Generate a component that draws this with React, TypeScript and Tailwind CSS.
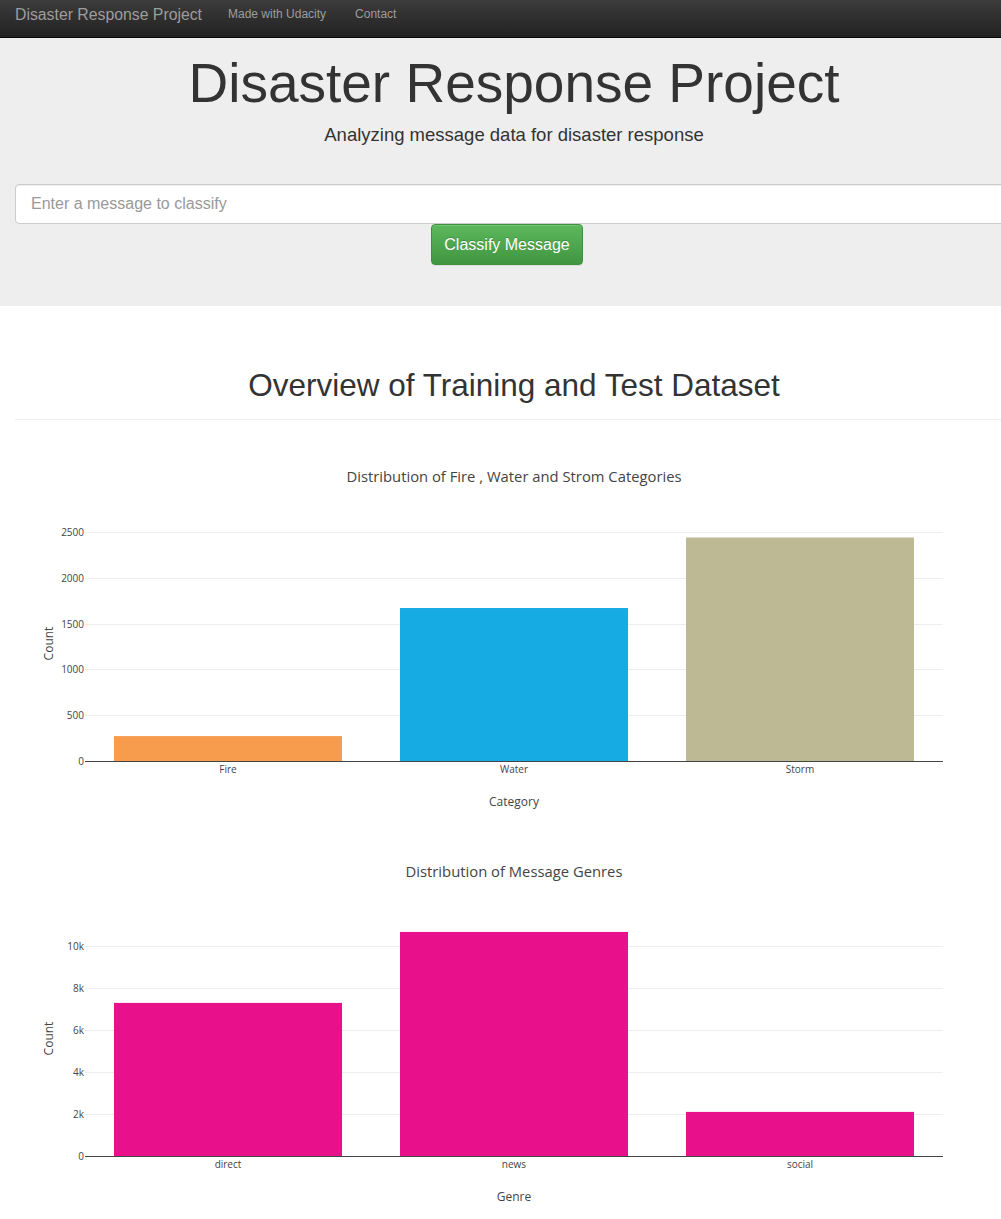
import React from "react";

type ChartProps = {
  title: string;
  xTitle: string;
  cats: string[];
  values: number[];
  colors: string[];
  ticks: number[];
  tickLabels: string[];
  scale: number;
};

function Chart({ title, xTitle, cats, values, colors, ticks, tickLabels, scale }: ChartProps) {
  const x0 = 85;
  const x1 = 943;
  const zeroY = 321;
  const band = 286;
  const font = "'Open Sans', Verdana, Arial, sans-serif";
  return (
    <svg width={1001} height={395} className="block" fontFamily={font}>
      <text x={514} y={41.5} fontSize={14.8} fill="#444" textAnchor="middle">
        {title}
      </text>
      {ticks.map((t, i) => {
        const y = Math.round(zeroY - t * scale) + 0.5;
        return (
          <g key={t}>
            {t !== 0 && <line x1={x0} x2={x1} y1={y} y2={y} stroke="#eee" strokeWidth={1} />}
            <text x={84} y={y + 3.5} fontSize={10} fill="#444" textAnchor="end">
              {tickLabels[i]}
            </text>
          </g>
        );
      })}
      {values.map((v, i) => {
        const h = v * scale;
        return (
          <rect
            key={cats[i]}
            x={x0 + i * band + 29}
            y={zeroY - h}
            width={228}
            height={h}
            fill={colors[i]}
          />
        );
      })}
      <line x1={x0} x2={x1} y1={zeroY + 0.5} y2={zeroY + 0.5} stroke="#444" strokeWidth={1} />
      {cats.map((c, i) => (
        <text key={c} x={x0 + i * band + 143} y={zeroY + 11.5} fontSize={10} fill="#444" textAnchor="middle">
          {c}
        </text>
      ))}
      <text x={514} y={zeroY + 45} fontSize={12} fill="#444" textAnchor="middle">
        {xTitle}
      </text>
      <text
        x={53}
        y={203.5}
        fontSize={12}
        fill="#444"
        textAnchor="middle"
        transform="rotate(-90 53 203.5)"
      >
        Count
      </text>
    </svg>
  );
}

export default function App() {
  return (
    <div className="w-full min-h-screen overflow-hidden bg-white font-['Liberation_Sans',Arial,sans-serif] text-[#333]">
      {/* Navbar */}
      <div className="h-[38px] w-full bg-gradient-to-b from-[#3c3c3c] to-[#222] border-b border-[#080808]">
        <div className="flex items-start">
          <span className="ml-[15px] mt-[5px] text-[15.8px] leading-[20px] text-[#9d9d9d]">
            Disaster Response Project
          </span>
          <span className="ml-[26px] mt-[4px] text-[12px] leading-[20px] text-[#9d9d9d]">Made with Udacity</span>
          <span className="ml-[29px] mt-[4px] text-[12px] leading-[20px] text-[#9d9d9d]">Contact</span>
        </div>
      </div>

      <div className="w-[1028px]">
        {/* Jumbotron */}
        <div className="bg-[#eee] pt-[15px] pb-[41px]">
          <h1 className="text-center text-[55px] leading-[60px] text-[#333]">Disaster Response Project</h1>
          <p className="mt-[10px] text-center text-[18.5px] leading-[24px] text-[#333]">
            Analyzing message data for disaster response
          </p>
          <div className="mt-[37px] px-[15px] flex flex-col items-center">
            <input
              className="w-full h-[40px] rounded-[4px] border border-[#ccc] bg-white px-[15px] text-[16px] text-[#555] shadow-[inset_0_1px_1px_rgba(0,0,0,0.075)] placeholder:text-[#999] outline-none"
              placeholder="Enter a message to classify"
            />
            <button className="mr-[14px] w-[152px] h-[41px] rounded-[4px] border border-[#3e8f3e] bg-gradient-to-b from-[#5cb85c] to-[#419641] text-[16px] text-white [text-shadow:0_-1px_0_rgba(0,0,0,0.2)] shadow-[inset_0_1px_0_rgba(255,255,255,0.15),0_1px_1px_rgba(0,0,0,0.075)]">
              Classify Message
            </button>
          </div>
        </div>

        {/* Overview heading */}
        <div className="px-[15px]">
          <h2 className="mt-[62px] text-center text-[31.5px] leading-[34px] text-[#333]">
            Overview of Training and Test Dataset
          </h2>
          <div className="mt-[17px] h-px bg-[#eee]" />
        </div>
      </div>

      <div className="mt-[20px]">
        <Chart
          title="Distribution of Fire , Water and Strom Categories"
          xTitle="Category"
          cats={["Fire", "Water", "Storm"]}
          values={[272, 1670, 2440]}
          colors={["#f79c4d", "#17abe3", "#bdb994"]}
          ticks={[0, 500, 1000, 1500, 2000, 2500]}
          tickLabels={["0", "500", "1000", "1500", "2000", "2500"]}
          scale={229 / 2500}
        />
        <Chart
          title="Distribution of Message Genres"
          xTitle="Genre"
          cats={["direct", "news", "social"]}
          values={[7290, 10670, 2100]}
          colors={["#e9108b", "#e9108b", "#e9108b"]}
          ticks={[0, 2000, 4000, 6000, 8000, 10000]}
          tickLabels={["0", "2k", "4k", "6k", "8k", "10k"]}
          scale={210 / 10000}
        />
      </div>
    </div>
  );
}
